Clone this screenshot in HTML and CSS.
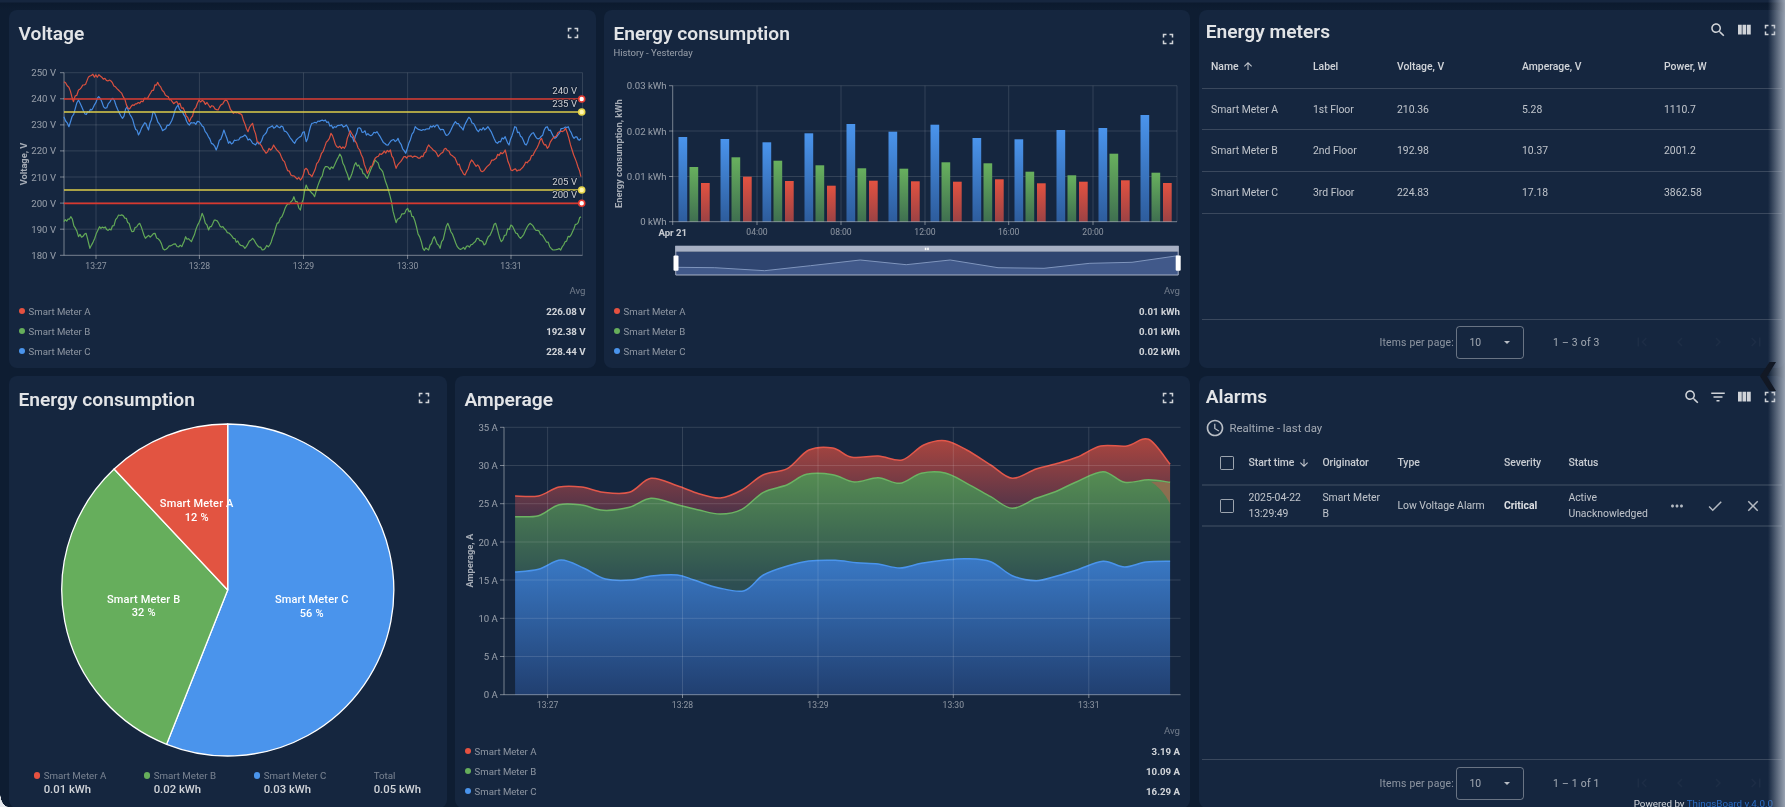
FILE: index.html
```html
<!DOCTYPE html>
<html lang="en">
<head>
<meta charset="utf-8">
<title>Smart meters dashboard</title>
<link rel="stylesheet" href="styles.css">
</head>
<body>
<svg class="icon-defs" width="0" height="0">
  <defs>
    <path id="i-full" d="M7 14H5v5h5v-2H7v-3zm-2-4h2V7h3V5H5v5zm12 7h-3v2h5v-5h-2v3zM14 5v2h3v3h2V5h-5z"/>
    <path id="i-search" d="M15.5 14h-.79l-.28-.27C15.41 12.59 16 11.11 16 9.5 16 5.91 13.09 3 9.5 3S3 5.91 3 9.5 5.91 16 9.5 16c1.61 0 3.09-.59 4.23-1.57l.27.28v.79l5 4.99L20.49 19l-4.99-5zm-6 0C7.01 14 5 11.99 5 9.5S7.01 5 9.5 5 14 7.01 14 9.5 11.99 14 9.5 14z"/>
    <path id="i-cols" d="M10 18h5V5h-5v13zm-6 0h5V5H4v13zM16 5v13h5V5h-5z"/>
    <path id="i-filter" d="M10 18h4v-2h-4v2zM3 6v2h18V6H3zm3 7h12v-2H6v2z"/>
    <path id="i-first" d="M18.41 16.59L13.82 12l4.59-4.59L17 6l-6 6 6 6zM6 6h2v12H6z"/>
    <path id="i-prev" d="M15.41 7.41L14 6l-6 6 6 6 1.41-1.41L10.83 12z"/>
    <path id="i-next" d="M10 6L8.59 7.41 13.17 12l-4.58 4.59L10 18l6-6z"/>
    <path id="i-last" d="M5.59 7.41L10.18 12l-4.59 4.59L7 18l6-6-6-6zM16 6h2v12h-2z"/>
    <linearGradient id="g-blue" x1="0" y1="0" x2="0" y2="1"><stop offset="0" stop-color="#4a94ec"/><stop offset="1" stop-color="#2d5c9c"/></linearGradient>
    <linearGradient id="g-green" x1="0" y1="0" x2="0" y2="1"><stop offset="0" stop-color="#68b05e"/><stop offset="1" stop-color="#3f6f50"/></linearGradient>
    <linearGradient id="g-red" x1="0" y1="0" x2="0" y2="1"><stop offset="0" stop-color="#e25241"/><stop offset="1" stop-color="#9c4244"/></linearGradient>
    <linearGradient id="a-red" gradientUnits="userSpaceOnUse" x1="0" y1="440" x2="0" y2="520"><stop offset="0" stop-color="#a9453f"/><stop offset="1" stop-color="#46324a"/></linearGradient>
    <linearGradient id="a-green" gradientUnits="userSpaceOnUse" x1="0" y1="470" x2="0" y2="585"><stop offset="0" stop-color="#568e52"/><stop offset="1" stop-color="#2d4e52"/></linearGradient>
    <linearGradient id="a-blue" gradientUnits="userSpaceOnUse" x1="0" y1="560" x2="0" y2="695"><stop offset="0" stop-color="#3978c4"/><stop offset="1" stop-color="#213f70"/></linearGradient>
  </defs>
</svg>

<div class="page">
  <div class="row row-top">
    <section class="card card-third">
      <header class="head head-std">
        <h2 class="title">Voltage</h2>
        <svg class="icon" viewBox="0 0 24 24"><use href="#i-full"/></svg>
      </header>
      <svg class="chart chart-voltage" viewBox="9 56 586.5 225">
        <path class="grid" d="M64 72.7H582.5M64 98.8H582.5M64 124.9H582.5M64 150.9H582.5M64 177H582.5M64 203.1H582.5M64 229.2H582.5M96 72.7V255.3M199.4 72.7V255.3M303.5 72.7V255.3M407.6 72.7V255.3M511 72.7V255.3M582.5 72.7V255.3"/>
        <path class="axis" d="M64 72.7V255.3H582.5M60 72.7H64M60 98.8H64M60 124.9H64M60 150.9H64M60 177H64M60 203.1H64M60 229.2H64M60 255.3H64M96 255.3V259M199.4 255.3V259M303.5 255.3V259M407.6 255.3V259M511 255.3V259"/>
        <g id="voltage-lines"></g>
        <path class="limit-red" d="M64 99H581M64 203.3H581"/>
        <path class="limit-yellow" d="M64 112H581M64 190H581"/>
        <circle class="dot-red" cx="581.7" cy="99" r="3"/>
        <circle class="dot-yellow" cx="581.7" cy="112" r="3"/>
        <circle class="dot-yellow" cx="581.7" cy="190" r="3"/>
        <circle class="dot-red" cx="581.7" cy="203.3" r="3"/>
        <text class="limit-label" x="577" y="90">240 V</text>
        <text class="limit-label" x="577" y="103">235 V</text>
        <text class="limit-label" x="577" y="181">205 V</text>
        <text class="limit-label" x="577" y="194.5">200 V</text>
        <text class="ylab" x="56" y="72.7">250 V</text>
        <text class="ylab" x="56" y="98.8">240 V</text>
        <text class="ylab" x="56" y="124.9">230 V</text>
        <text class="ylab" x="56" y="150.9">220 V</text>
        <text class="ylab" x="56" y="177">210 V</text>
        <text class="ylab" x="56" y="203.1">200 V</text>
        <text class="ylab" x="56" y="229.2">190 V</text>
        <text class="ylab" x="56" y="255.3">180 V</text>
        <text class="xlab" x="96" y="266">13:27</text>
        <text class="xlab" x="199.4" y="266">13:28</text>
        <text class="xlab" x="303.5" y="266">13:29</text>
        <text class="xlab" x="407.6" y="266">13:30</text>
        <text class="xlab" x="511" y="266">13:31</text>
        <text class="ytitle" transform="translate(23 164) rotate(-90)">Voltage, V</text>
      </svg>
      <div class="legend">
        <div class="legend-avg">Avg</div>
        <div class="legend-row"><span class="dot red"></span><span class="legend-name">Smart Meter A</span><span class="legend-val">226.08 V</span></div>
        <div class="legend-row"><span class="dot green"></span><span class="legend-name">Smart Meter B</span><span class="legend-val">192.38 V</span></div>
        <div class="legend-row"><span class="dot blue"></span><span class="legend-name">Smart Meter C</span><span class="legend-val">228.44 V</span></div>
      </div>
    </section>

    <section class="card card-third-b">
      <header class="head head-sub">
        <div>
          <h2 class="title title-sub">Energy consumption</h2>
          <div class="subtitle">History - Yesterday</div>
        </div>
        <svg class="icon" viewBox="0 0 24 24"><use href="#i-full"/></svg>
      </header>
      <svg class="chart chart-energy" viewBox="604 68 586 213">
        <path class="grid" d="M672.7 85.7H1177M672.7 131H1177M672.7 176.5H1177M757 85.7V221.7M841 85.7V221.7M925 85.7V221.7M1008.7 85.7V221.7M1093 85.7V221.7M1177 85.7V221.7"/>
        <g id="energy-bars"></g>
        <path class="axis" d="M672.7 85.7V221.7H1177M669 85.7H672.7M669 131H672.7M669 176.5H672.7M669 221.7H672.7M757 221.7V225M841 221.7V225M925 221.7V225M1008.7 221.7V225M1093 221.7V225M672.7 221.7V225"/>
        <text class="ylab" x="666.6" y="85.7">0.03 kWh</text>
        <text class="ylab" x="666.6" y="131">0.02 kWh</text>
        <text class="ylab" x="666.6" y="176.5">0.01 kWh</text>
        <text class="ylab" x="666.6" y="221.7">0 kWh</text>
        <text class="xlab-bold" x="672.7" y="232.5">Apr 21</text>
        <text class="xlab" x="757" y="232">04:00</text>
        <text class="xlab" x="841" y="232">08:00</text>
        <text class="xlab" x="925" y="232">12:00</text>
        <text class="xlab" x="1008.7" y="232">16:00</text>
        <text class="xlab" x="1093" y="232">20:00</text>
        <text class="ytitle" transform="translate(618 153.7) rotate(-90)">Energy consumption, kWh</text>
        <rect class="zoom-body" x="675.3" y="251.7" width="503.3" height="23.3"/>
        <path class="zoom-area" d="M676.5 267.3L714.8 267.7 764.6 270.7 810.5 265.7 860.2 260 906.2 264.7 950.2 260 998 267.7 1044 268.3 1089.9 263.3 1132 262.3 1177.9 255.7V275H676.5Z"/>
        <path class="zoom-line" d="M676.5 267.3L714.8 267.7 764.6 270.7 810.5 265.7 860.2 260 906.2 264.7 950.2 260 998 267.7 1044 268.3 1089.9 263.3 1132 262.3 1177.9 255.7"/>
        <rect class="zoom-band" x="675.3" y="245.7" width="503.3" height="6"/>
        <path class="zoom-frame" d="M675.8 246V275H1178.2V246"/>
        <rect class="zoom-grip" x="924.8" y="247.7" width="1.6" height="2.4"/>
        <rect class="zoom-grip" x="927.2" y="247.7" width="1.6" height="2.4"/>
        <rect class="zoom-handle" x="673.5" y="255.5" width="5" height="15.2" rx="1"/>
        <rect class="zoom-handle" x="1175.7" y="255.5" width="5" height="15.2" rx="1"/>
      </svg>
      <div class="legend">
        <div class="legend-avg">Avg</div>
        <div class="legend-row"><span class="dot red"></span><span class="legend-name">Smart Meter A</span><span class="legend-val">0.01 kWh</span></div>
        <div class="legend-row"><span class="dot green"></span><span class="legend-name">Smart Meter B</span><span class="legend-val">0.01 kWh</span></div>
        <div class="legend-row"><span class="dot blue"></span><span class="legend-name">Smart Meter C</span><span class="legend-val">0.02 kWh</span></div>
      </div>
    </section>

    <section class="card card-table">
      <header class="head head-table">
        <h2 class="title">Energy meters</h2>
        <div class="tools">
          <svg class="icon" viewBox="0 0 24 24"><use href="#i-search"/></svg>
          <svg class="icon" viewBox="0 0 24 24"><use href="#i-cols"/></svg>
          <svg class="icon" viewBox="0 0 24 24"><use href="#i-full"/></svg>
        </div>
      </header>
      <div class="table meters">
        <div class="tr th">
          <span class="sort">Name <svg class="sort-icon" viewBox="0 0 24 24"><path d="M4 12l1.41 1.41L11 7.83V20h2V7.83l5.58 5.59L20 12l-8-8-8 8z"/></svg></span>
          <span>Label</span><span>Voltage, V</span><span>Amperage, V</span><span>Power, W</span>
        </div>
        <div class="tr td"><span>Smart Meter A</span><span>1st Floor</span><span>210.36</span><span>5.28</span><span>1110.7</span></div>
        <div class="tr td"><span>Smart Meter B</span><span>2nd Floor</span><span>192.98</span><span>10.37</span><span>2001.2</span></div>
        <div class="tr td"><span>Smart Meter C</span><span>3rd Floor</span><span>224.83</span><span>17.18</span><span>3862.58</span></div>
      </div>
      <footer class="pager">
        <span class="pager-label">Items per page:</span>
        <span class="select"><span>10</span><i class="caret"></i></span>
        <span class="pager-range">1 – 3 of 3</span>
        <span class="pager-btns">
          <svg class="icon" viewBox="0 0 24 24"><use href="#i-first"/></svg>
          <svg class="icon" viewBox="0 0 24 24"><use href="#i-prev"/></svg>
          <svg class="icon" viewBox="0 0 24 24"><use href="#i-next"/></svg>
          <svg class="icon" viewBox="0 0 24 24"><use href="#i-last"/></svg>
        </span>
      </footer>
    </section>
  </div>

  <div class="row row-bottom">
    <section class="card card-pie">
      <header class="head head-low">
        <h2 class="title">Energy consumption</h2>
        <svg class="icon" viewBox="0 0 24 24"><use href="#i-full"/></svg>
      </header>
      <svg class="chart chart-pie" viewBox="9 420 437.5 348">
        <path class="slice blue-fill" d="M227.7 590V424A166 166 0 1 1 166.6 744.3Z"/>
        <path class="slice green-fill" d="M227.7 590L166.6 744.3A166 166 0 0 1 114.1 469Z"/>
        <path class="slice red-fill" d="M227.7 590L114.1 469A166 166 0 0 1 227.7 424Z"/>
        <text class="pie-label" x="196.7" y="503.7">Smart Meter A</text>
        <text class="pie-label" x="196.7" y="517.3">12 %</text>
        <text class="pie-label" x="143.7" y="599">Smart Meter B</text>
        <text class="pie-label" x="143.7" y="612.3">32 %</text>
        <text class="pie-label" x="311.7" y="599.5">Smart Meter C</text>
        <text class="pie-label" x="311.7" y="613">56 %</text>
      </svg>
      <div class="pie-legend">
        <div class="pie-item"><span class="dot red"></span><span class="pie-name">Smart Meter A</span><span class="pie-val">0.01 kWh</span></div>
        <div class="pie-item"><span class="dot green"></span><span class="pie-name">Smart Meter B</span><span class="pie-val">0.02 kWh</span></div>
        <div class="pie-item"><span class="dot blue"></span><span class="pie-name">Smart Meter C</span><span class="pie-val">0.03 kWh</span></div>
        <div class="pie-item"><span class="dot none"></span><span class="pie-name">Total</span><span class="pie-val">0.05 kWh</span></div>
      </div>
    </section>

    <section class="card card-amp">
      <header class="head head-low">
        <h2 class="title">Amperage</h2>
        <svg class="icon" viewBox="0 0 24 24"><use href="#i-full"/></svg>
      </header>
      <svg class="chart chart-amp" viewBox="455 420 735 301">
        <g id="amp-areas"></g>
        <path class="grid" d="M504 427.3H1180.6M504 465.5H1180.6M504 503.7H1180.6M504 542H1180.6M504 580H1180.6M504 618.3H1180.6M504 656.5H1180.6M547.6 427.3V694.7M682.5 427.3V694.7M818 427.3V694.7M953.3 427.3V694.7M1088.8 427.3V694.7"/>
        <path class="axis" d="M504 427.3V694.7H1180.6M500 427.3H504M500 465.5H504M500 503.7H504M500 542H504M500 580H504M500 618.3H504M500 656.5H504M500 694.7H504M547.6 694.7V698M682.5 694.7V698M818 694.7V698M953.3 694.7V698M1088.8 694.7V698"/>
        <text class="ylab" x="497.8" y="427.3">35 A</text>
        <text class="ylab" x="497.8" y="465.5">30 A</text>
        <text class="ylab" x="497.8" y="503.7">25 A</text>
        <text class="ylab" x="497.8" y="542">20 A</text>
        <text class="ylab" x="497.8" y="580">15 A</text>
        <text class="ylab" x="497.8" y="618.3">10 A</text>
        <text class="ylab" x="497.8" y="656.5">5 A</text>
        <text class="ylab" x="497.8" y="694.7">0 A</text>
        <text class="xlab" x="547.6" y="705">13:27</text>
        <text class="xlab" x="682.5" y="705">13:28</text>
        <text class="xlab" x="818" y="705">13:29</text>
        <text class="xlab" x="953.3" y="705">13:30</text>
        <text class="xlab" x="1088.8" y="705">13:31</text>
        <text class="ytitle" transform="translate(469 560.7) rotate(-90)">Amperage, A</text>
      </svg>
      <div class="legend">
        <div class="legend-avg">Avg</div>
        <div class="legend-row"><span class="dot red"></span><span class="legend-name">Smart Meter A</span><span class="legend-val">3.19 A</span></div>
        <div class="legend-row"><span class="dot green"></span><span class="legend-name">Smart Meter B</span><span class="legend-val">10.09 A</span></div>
        <div class="legend-row"><span class="dot blue"></span><span class="legend-name">Smart Meter C</span><span class="legend-val">16.29 A</span></div>
      </div>
    </section>

    <section class="card card-table">
      <header class="head head-alarm">
        <h2 class="title">Alarms</h2>
        <div class="tools">
          <svg class="icon" viewBox="0 0 24 24"><use href="#i-search"/></svg>
          <svg class="icon" viewBox="0 0 24 24"><use href="#i-filter"/></svg>
          <svg class="icon" viewBox="0 0 24 24"><use href="#i-cols"/></svg>
          <svg class="icon" viewBox="0 0 24 24"><use href="#i-full"/></svg>
        </div>
      </header>
      <div class="timewindow">
        <svg class="clock" viewBox="0 0 24 24"><path d="M11.99 2C6.47 2 2 6.48 2 12s4.47 10 9.99 10C17.52 22 22 17.52 22 12S17.52 2 11.99 2zM12 20c-4.42 0-8-3.58-8-8s3.58-8 8-8 8 3.58 8 8-3.58 8-8 8zm.5-13H11v6l5.25 3.15.75-1.23-4.5-2.67z"/></svg>
        <span>Realtime - last day</span>
      </div>
      <div class="table alarms">
        <div class="ar ar-head">
          <i class="check"></i>
          <span class="sort">Start time <svg class="sort-icon" viewBox="0 0 24 24"><path d="M20 12l-1.41-1.41L13 16.17V4h-2v12.17l-5.58-5.59L4 12l8 8 8-8z"/></svg></span>
          <span>Originator</span><span>Type</span><span>Severity</span><span>Status</span><span></span>
        </div>
        <div class="ar ar-row">
          <i class="check"></i>
          <span>2025-04-22<br>13:29:49</span>
          <span>Smart Meter<br>B</span>
          <span>Low Voltage Alarm</span>
          <b class="crit">Critical</b>
          <span>Active<br>Unacknowledged</span>
          <span class="actions">
            <svg class="icon" viewBox="0 0 24 24"><path d="M6 10c-1.1 0-2 .9-2 2s.9 2 2 2 2-.9 2-2-.9-2-2-2zm12 0c-1.1 0-2 .9-2 2s.9 2 2 2 2-.9 2-2-.9-2-2-2zm-6 0c-1.1 0-2 .9-2 2s.9 2 2 2 2-.9 2-2-.9-2-2-2z"/></svg>
            <svg class="icon" viewBox="0 0 24 24"><path d="M9 16.17L4.83 12l-1.42 1.41L9 19 21 7l-1.41-1.41z"/></svg>
            <svg class="icon" viewBox="0 0 24 24"><path d="M19 6.41L17.59 5 12 10.59 6.41 5 5 6.41 10.59 12 5 17.59 6.41 19 12 13.41 17.59 19 19 17.59 13.41 12z"/></svg>
          </span>
        </div>
      </div>
      <footer class="pager">
        <span class="pager-label">Items per page:</span>
        <span class="select"><span>10</span><i class="caret"></i></span>
        <span class="pager-range">1 – 1 of 1</span>
        <span class="pager-btns">
          <svg class="icon" viewBox="0 0 24 24"><use href="#i-first"/></svg>
          <svg class="icon" viewBox="0 0 24 24"><use href="#i-prev"/></svg>
          <svg class="icon" viewBox="0 0 24 24"><use href="#i-next"/></svg>
          <svg class="icon" viewBox="0 0 24 24"><use href="#i-last"/></svg>
        </span>
      </footer>
    </section>
  </div>

  <div class="powered">Powered by <a class="powered-link">ThingsBoard v.4.0.0</a></div>
  <div class="edge-fade"></div>
  <svg class="drawer-tab" viewBox="0 0 16 29"><path d="M16 0H9.5L0 14.2 9.5 29H16L7 14.5Z"/></svg>
  <div class="window-corner"></div>
</div>
<script src="charts.js"></script>
</body>
</html>
```

FILE: styles.css
```css
* { box-sizing: border-box; }
html, body { margin: 0; height: 100%; overflow: hidden; background: #0e1d32; }
body { font-family: Roboto, "Liberation Sans", sans-serif; color: rgba(255,255,255,.76); }
.icon-defs { position: absolute; }

.page {
  position: relative;
  width: 1785px;
  height: 807px;
  overflow: hidden;
  padding: 10px 0 0 9px;
  display: flex;
  flex-direction: column;
  gap: 8.5px;
  background: linear-gradient(#16263f 0, #16263f 2px, #0c1a2e 3px, #0e1d32 10px);
  filter: blur(.4px);
}
.row { display: flex; gap: 8.5px; flex: none; }
.row-top { height: 357.5px; }
.row-bottom { height: 432px; }

.card {
  background: #15263f;
  border-radius: 8px;
  display: flex;
  flex-direction: column;
  flex: none;
  min-width: 0;
  position: relative;
}
.card-third { width: 586.5px; }
.card-third-b { width: 586px; }
.card-pie { width: 437.5px; }
.card-amp { width: 735px; }
.card-table { flex: 1 1 0; }

.head { display: flex; justify-content: space-between; align-items: center; padding: 0 13.5px 0 9.5px; flex: none; }
.head-std { height: 46px; }
.head-sub { height: 58px; }
.head-low { height: 44px; }
.head-table { height: 40.5px; padding: 0 6.5px 0 7.2px; }
.head-alarm { height: 41px; padding: 0 6.5px 0 7.2px; }

.title { margin: 0; font-size: 19.2px; line-height: 26px; font-weight: 600; color: rgba(255,255,255,.88); }
.head-std .title { margin-top: 2px; }
.head-low .title { margin-top: 3.5px; }
.head-table .title { margin-top: 3px; }
.title-sub { margin-top: 2px; margin-bottom: -1px; }
.subtitle { font-size: 9.5px; line-height: 14px; color: rgba(255,255,255,.55); }
.icon { width: 18px; height: 18px; fill: rgba(255,255,255,.8); display: block; flex: none; }
.tools { display: flex; gap: 7.7px; }

.chart { display: block; flex: none; }
.chart-voltage { width: 586.5px; height: 225px; }
.chart-energy { width: 586px; height: 213px; }
.chart-pie { width: 437.5px; height: 348px; }
.chart-amp { width: 735px; height: 301px; }

.grid { fill: none; stroke: rgba(255,255,255,.13); stroke-width: 1; }
.axis { fill: none; stroke: rgba(255,255,255,.42); stroke-width: 1; }
.ylab { font-size: 9.6px; fill: rgba(255,255,255,.55); text-anchor: end; dominant-baseline: central; }
.xlab { font-size: 8.6px; fill: rgba(255,255,255,.5); text-anchor: middle; dominant-baseline: central; }
.xlab-bold { font-size: 9.6px; font-weight: 700; fill: rgba(255,255,255,.76); text-anchor: middle; dominant-baseline: central; }
.ytitle { font-size: 9.3px; font-weight: 700; fill: rgba(255,255,255,.62); text-anchor: middle; dominant-baseline: central; }

.series { fill: none; stroke-width: 1.2; stroke-linejoin: round; }
.s-red { stroke: #d9503f; }
.s-green { stroke: #62a857; }
.s-blue { stroke: #468ce2; }
.amp-line { fill: none; stroke-width: 1.5; }
.amp-red { stroke: #e2574a; }
.amp-green { stroke: #6cb363; }
.amp-blue { stroke: #4a94ec; }
.amp-overlap { fill: #8c6e50; }

.limit-red { fill: none; stroke: #d8382e; stroke-width: 1.7; }
.limit-yellow { fill: none; stroke: #dccb4a; stroke-width: 1.7; }
.dot-red { fill: #fff; stroke: #e6392f; stroke-width: 1.6; }
.dot-yellow { fill: #fff6b0; stroke: #e8d64a; stroke-width: 1.6; }
.limit-label { font-size: 9.6px; fill: rgba(255,255,255,.78); text-anchor: end; dominant-baseline: central; paint-order: stroke; stroke: rgba(15,28,48,.85); stroke-width: 1.6px; }

.bar-blue { fill: url(#g-blue); }
.bar-green { fill: url(#g-green); }
.bar-red { fill: url(#g-red); }

.zoom-body { fill: #2f4570; }
.zoom-area { fill: #41598a; }
.zoom-line { fill: none; stroke: #7f95bd; stroke-width: 1; }
.zoom-band { fill: #a7b0c4; }
.zoom-frame { fill: none; stroke: #a7b0c4; stroke-width: 1; }
.zoom-grip { fill: #fff; }
.zoom-handle { fill: #fff; }

.legend { margin-top: auto; padding: 0 10px 7px; flex: none; }
.card-amp .legend { padding-bottom: 7.5px; }
.legend-avg { height: 20px; line-height: 20px; text-align: right; font-size: 9.6px; color: rgba(255,255,255,.38); }
.legend-row { height: 20px; display: flex; align-items: center; }
.legend-name { font-size: 9.6px; color: rgba(255,255,255,.5); margin-left: 3.4px; }
.legend-val { margin-left: auto; font-size: 9.7px; font-weight: 700; color: rgba(255,255,255,.8); }
.dot { width: 6.2px; height: 6.2px; border-radius: 50%; flex: none; display: block; }
.red { background: #e55140; }
.green { background: #66ae5b; }
.blue { background: #4a94ec; }
.none { background: transparent; }

.slice { stroke: #fff; stroke-width: 1.3; stroke-linejoin: round; }
.blue-fill { fill: #4a94ec; }
.green-fill { fill: #66ae5c; }
.red-fill { fill: #e25441; }
.pie-label { font-size: 11px; font-weight: 500; fill: #fff; text-anchor: middle; dominant-baseline: central; letter-spacing: .15px; }

.pie-legend { display: grid; grid-template-columns: repeat(4, 110px); padding-left: 25.3px; flex: none; }
.pie-item { display: grid; grid-template-columns: 9.4px auto; align-items: center; justify-content: start; }
.pie-name { font-size: 9.7px; line-height: 15px; color: rgba(255,255,255,.42); }
.pie-val { grid-column: 2; font-size: 11.3px; line-height: 14px; font-weight: 500; color: rgba(255,255,255,.8); }

.table { margin: 0 3px 0 3.5px; font-size: 10.4px; flex: none; }
.tr { display: grid; grid-template-columns: 102px 84px 125px 142px 1fr; align-items: center; padding-left: 9px; border-bottom: 1px solid rgba(255,255,255,.16); }
.th { height: 38.3px; padding-bottom: 6px; font-weight: 500; color: rgba(255,255,255,.8); }
.td { height: 41.67px; color: rgba(255,255,255,.72); }
.sort { display: flex; align-items: center; gap: 3.5px; }
.sort-icon { width: 12px; height: 12px; fill: rgba(255,255,255,.75); flex: none; }
.alarms .sort { gap: 4px; }

.timewindow { height: 22px; display: flex; align-items: center; gap: 4.6px; padding-left: 8px; font-size: 11.4px; color: rgba(255,255,255,.6); flex: none; }
.clock { width: 20px; height: 20px; margin-left: -1.6px; fill: rgba(255,255,255,.7); flex: none; }

.ar { display: grid; grid-template-columns: 28.4px 74px 75px 106.5px 64.5px 99.5px 1fr; align-items: center; padding-left: 18px; }
.ar-head { height: 47px; padding-top: 2px; border-bottom: 2px solid rgba(255,255,255,.1); font-weight: 500; color: rgba(255,255,255,.76); }
.ar-row { height: 41px; border-bottom: 2px solid rgba(255,255,255,.1); line-height: 16px; color: rgba(255,255,255,.72); }
.check { width: 14.4px; height: 14px; border: 1.5px solid rgba(255,255,255,.58); border-radius: 1.5px; display: block; }
.crit { font-weight: 700; color: rgba(255,255,255,.85); }
.actions { display: flex; gap: 20px; }
.actions .icon { fill: rgba(255,255,255,.68); }

.pager { margin: auto 3px 0 3.5px; border-top: 1px solid rgba(255,255,255,.16); padding: 6.6px 0 0 177.4px; height: 49px; display: flex; align-items: flex-start; flex: none; font-size: 10.4px; }
.pager-label { width: 77px; line-height: 33px; color: rgba(255,255,255,.5); white-space: nowrap; letter-spacing: .2px; }
.select { width: 67.6px; height: 33px; border: 1px solid rgba(255,255,255,.36); border-radius: 3.5px; display: flex; align-items: center; justify-content: space-between; padding: 0 13px 0 12px; color: rgba(255,255,255,.58); }
.caret { width: 0; height: 0; border-left: 3.8px solid transparent; border-right: 3.8px solid transparent; border-top: 3.8px solid rgba(255,255,255,.7); display: block; }
.pager-range { margin-left: 29px; width: 43px; line-height: 33px; white-space: nowrap; color: rgba(255,255,255,.6); letter-spacing: .25px; }
.pager-btns { display: flex; gap: 20px; margin-left: 36.6px; padding-top: 7px; }
.pager-btns .icon { fill: rgba(255,255,255,.035); }

.powered { position: absolute; right: 12px; bottom: -4px; font-size: 9.8px; line-height: 14px; color: rgba(255,255,255,.8); white-space: nowrap; }
.powered-link { color: #2a6cc4; }
.edge-fade { position: absolute; top: 0; bottom: 0; right: 0; width: 17px; background: linear-gradient(to right, rgba(160,170,185,0), rgba(175,183,196,.85)); }
.drawer-tab { position: absolute; left: 1760px; top: 362px; width: 16px; height: 29px; fill: #121824; }
.window-corner { position: absolute; left: 0; bottom: 0; width: 8px; height: 15px; background: radial-gradient(ellipse 8px 15px at 100% 0, transparent 96%, #e4e7ec 100%); }
```

FILE: charts.js
```javascript
(function () {
  var NS = 'http://www.w3.org/2000/svg';
  function el(parent, tag, cls, attrs) {
    var n = document.createElementNS(NS, tag);
    n.setAttribute('class', cls);
    for (var k in attrs) n.setAttribute(k, attrs[k]);
    parent.appendChild(n);
    return n;
  }

  var seed = 7;
  function rnd() { seed = (seed * 1664525 + 1013904223) % 4294967296; return seed / 4294967296 - 0.5; }

  /* Voltage: traced samples, with the fine sensor noise filled in between them */
  var SX = 2.613, SY = 3;
  function noisy(s) {
    var out = [];
    for (var i = 0; i < s.length - 2; i += 2) {
      var x0 = s[i] / SX, y0 = s[i + 1] / SY, x1 = s[i + 2] / SX, y1 = s[i + 3] / SY;
      var n = Math.max(1, Math.round((x1 - x0) / 1.5));
      for (var j = 0; j < n; j++) {
        var t = j / n;
        out.push((x0 + (x1 - x0) * t).toFixed(1) + ' ' + (y0 + (y1 - y0) * t + (j ? rnd() * 3.6 : 0)).toFixed(1));
      }
    }
    out.push((s[s.length - 2] / SX).toFixed(1) + ' ' + (s[s.length - 1] / SY).toFixed(1));
    return 'M' + out.join('L');
  }
  var vRed = [167,245,180,262,192,305,205,270,220,255,235,228,262,228,290,243,305,265,322,290,335,325,365,310,390,285,412,247,432,285,450,305,470,310,495,365,520,300,545,315,570,330,590,300,610,340,632,345,648,395,660,370,672,425,695,460,715,435,735,470,760,525,785,540,800,505,815,530,840,460,865,400,880,440,900,445,915,392,940,450,960,520,985,470,1000,460,1020,450,1035,505,1055,470,1105,470,1120,435,1145,470,1165,445,1185,470,1215,525,1232,480,1260,515,1285,480,1320,450,1335,510,1355,510,1385,480,1415,415,1430,445,1450,410,1478,385,1495,450,1518,530];
  var vGreen = [167,665,185,650,205,710,225,700,235,745,260,680,290,690,310,645,330,655,345,695,365,670,380,715,405,700,430,750,450,735,475,740,485,710,500,725,528,640,545,690,560,660,590,690,610,715,640,745,660,715,685,750,705,735,720,685,745,625,768,590,785,630,800,555,822,590,850,500,870,505,888,462,912,540,930,488,960,535,980,480,1000,515,1015,570,1035,668,1065,625,1080,650,1105,745,1120,750,1135,710,1150,745,1170,670,1195,740,1215,748,1250,715,1265,735,1295,670,1310,725,1335,675,1360,715,1385,670,1420,710,1445,750,1465,750,1500,685,1518,650];
  var vBlue = [167,350,180,380,205,300,222,342,240,330,258,290,275,325,295,295,320,355,332,320,362,405,378,368,388,390,400,335,425,392,445,370,465,315,495,375,520,365,540,400,565,450,585,390,597,430,620,420,640,405,660,430,680,430,700,385,735,378,770,430,795,395,800,425,815,370,850,360,870,385,905,375,925,425,935,385,965,405,985,395,1010,435,1040,415,1060,460,1085,380,1110,390,1140,375,1170,405,1190,365,1210,390,1225,352,1250,395,1275,380,1300,430,1320,410,1330,435,1345,380,1375,435,1390,400,1410,415,1430,380,1450,415,1470,385,1485,380,1500,415,1518,415];
  var v = document.getElementById('voltage-lines');
  el(v, 'path', 'series s-green', { d: noisy(vGreen) });
  el(v, 'path', 'series s-blue', { d: noisy(vBlue) });
  el(v, 'path', 'series s-red', { d: noisy(vRed) });

  /* Energy: bar tops per hour group */
  var tops = {
    blue:  [137, 139, 142.3, 133.3, 124, 131.7, 124.7, 138, 139.3, 130, 128, 115],
    green: [167, 157.3, 160.7, 165.3, 168.3, 168.7, 162.3, 163.3, 171.7, 175.3, 153.7, 172.7],
    red:   [183, 176.7, 181, 185.7, 180.7, 181.3, 181.7, 179.3, 183.3, 181.7, 180.3, 183]
  };
  var offs = { blue: 0, green: 11, red: 22.5 };
  var e = document.getElementById('energy-bars');
  ['blue', 'green', 'red'].forEach(function (c) {
    tops[c].forEach(function (y, i) {
      var x = 678.5 + i * 42 + offs[c];
      el(e, 'rect', 'bar-' + c, { x: x, y: y, width: 8.7, height: 221.7 - y });
    });
  });

  /* Amperage: smooth stacked areas */
  function P(s) {
    var o = [];
    for (var i = 0; i < s.length; i += 2) o.push([450 + s[i] / 2.09, 370 + s[i + 1] / 3]);
    return o;
  }
  function curve(p) {
    var d = '';
    for (var i = 0; i < p.length - 1; i++) {
      var a = p[Math.max(i - 1, 0)], b = p[i], c = p[i + 1], f = p[Math.min(i + 2, p.length - 1)];
      d += 'C' + (b[0] + (c[0] - a[0]) / 6).toFixed(1) + ' ' + (b[1] + (c[1] - a[1]) / 6).toFixed(1) + ' ' +
        (c[0] - (f[0] - b[0]) / 6).toFixed(1) + ' ' + (c[1] - (f[1] - b[1]) / 6).toFixed(1) + ' ' +
        c[0].toFixed(1) + ' ' + c[1].toFixed(1);
    }
    return d;
  }
  function M(p) { return 'M' + p[0][0].toFixed(1) + ' ' + p[0][1].toFixed(1); }
  function L(p) { return 'L' + p[0][0].toFixed(1) + ' ' + p[0][1].toFixed(1); }
  var aRed = P([136,378,185,378,228,351,275,351,320,367,375,367,420,325,475,347,520,371,565,384,610,360,655,314,705,296,750,240,800,234,840,262,895,258,945,270,990,225,1035,212,1080,240,1130,285,1175,325,1225,297,1265,282,1310,262,1360,228,1415,228,1460,208,1505,283]);
  var aGreen = P([136,440,185,437,228,404,275,405,320,421,375,412,420,385,475,404,520,420,565,432,610,418,655,367,705,344,745,313,800,314,845,336,895,323,940,340,985,310,1035,309,1080,340,1130,380,1175,415,1225,385,1265,365,1310,335,1365,305,1410,337,1460,329,1505,337]);
  var aBlue = P([136,606,185,598,232,570,280,595,325,627,380,630,420,618,475,615,510,630,560,653,615,662,655,615,705,588,750,573,805,571,850,578,895,582,940,594,985,580,1035,570,1080,566,1130,575,1175,617,1225,632,1270,617,1310,600,1365,574,1410,591,1455,576,1505,574]);
  var a = document.getElementById('amp-areas');
  var base = 694.7;
  function rev(p) { return p.slice().reverse(); }
  el(a, 'path', 'amp-area', { fill: 'url(#a-red)', d: M(aRed) + curve(aRed) + L(rev(aGreen)) + curve(rev(aGreen)) + 'Z' });
  el(a, 'path', 'amp-area', { fill: 'url(#a-green)', d: M(aGreen) + curve(aGreen) + L(rev(aBlue)) + curve(rev(aBlue)) + 'Z' });
  el(a, 'path', 'amp-area', { fill: 'url(#a-blue)', d: M(aBlue) + curve(aBlue) + 'V' + base + 'H' + aBlue[0][0].toFixed(1) + 'Z' });
  el(a, 'path', 'amp-overlap', { d: 'M1150.9 481.7L1170 482.3V503.5Q1162 488 1150.9 481.7Z' });
  el(a, 'path', 'amp-line amp-red', { d: M(aRed) + curve(aRed) });
  el(a, 'path', 'amp-line amp-green', { d: M(aGreen) + curve(aGreen) });
  el(a, 'path', 'amp-line amp-blue', { d: M(aBlue) + curve(aBlue) });
})();
```
